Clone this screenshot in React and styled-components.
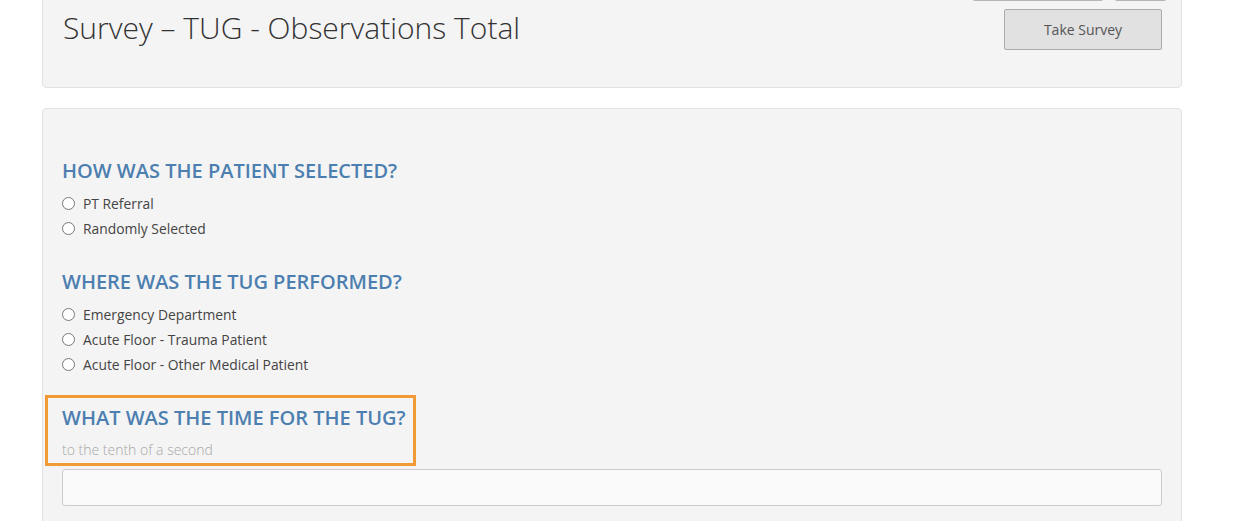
import React from "react";
import styled, { createGlobalStyle } from "styled-components";

const GlobalStyle = createGlobalStyle`
  html, body {
    margin: 0;
    padding: 0;
    background: #ffffff;
    font-family: "Open Sans", "Liberation Sans", sans-serif;
    overflow: hidden;
  }
`;

const Page = styled.div`
  width: 1140px;
  margin-left: 42px;
  display: flex;
  flex-direction: column;
  gap: 20px;
`;

const Panel = styled.div`
  background: #f4f4f4;
  border: 1px solid #e3e3e3;
  border-radius: 4px;
  box-sizing: border-box;
`;

const HeaderPanel = styled(Panel)`
  margin-top: -41px;
  padding: 11px 19px 37px 20px;
  display: flex;
  justify-content: space-between;
  align-items: flex-start;
`;

const Title = styled.h1`
  margin: 40px 0 0;
  font-size: 30px;
  line-height: 33px;
  font-weight: 300;
  color: #333;
`;

const Actions = styled.div`
  display: flex;
  flex-direction: column;
  align-items: flex-end;
  gap: 8px;
`;

const ButtonGroup = styled.div`
  display: flex;
  gap: 10px;
  margin-right: -5px;
`;

const GhostButton = styled.div`
  width: ${(p) => p.$w}px;
  height: 30px;
  box-sizing: border-box;
  border: 1px solid #b5b5b5;
  border-radius: 3px;
  background: #f4f4f4;
`;

const TakeButton = styled.button`
  width: 158px;
  height: 41px;
  background: #e1e1e1;
  border: 1px solid #acacac;
  border-radius: 2px;
  font-family: "Open Sans", "Liberation Sans", sans-serif;
  font-size: 14px;
  color: #555;
  cursor: pointer;
`;

const FormPanel = styled(Panel)`
  padding: 50px 19px 40px 19px;
  display: flex;
  flex-direction: column;
  align-items: flex-start;
`;

const Question = styled.h2`
  margin: 0 0 ${(p) => (p.$flush ? 0 : 8)}px;
  font-size: 20px;
  line-height: 24px;
  font-weight: 600;
  color: #4c7fb0;
  white-space: nowrap;
`;

const Options = styled.div`
  display: flex;
  flex-direction: column;
  margin-bottom: 29px;
`;

const Option = styled.label`
  display: flex;
  align-items: center;
  height: 25px;
  gap: 8px;
  font-size: 13.85px;
  color: #444;
`;

const Radio = styled.input`
  width: 13px;
  height: 13px;
  margin: 0;
`;

const Highlight = styled.div`
  margin: -11px 0 0 -17px;
  width: 371px;
  box-sizing: border-box;
  border: 3px solid #f29a36;
  padding: 8px 14px 4px;
`;

const Help = styled.div`
  margin-top: 11px;
  font-size: 14px;
  line-height: 18px;
  font-weight: 300;
  color: #a8a8a8;
`;

const TextInput = styled.input`
  margin-top: 3px;
  width: 100%;
  height: 37px;
  box-sizing: border-box;
  background: #fafafa;
  border: 1px solid #cccccc;
  border-radius: 3px;
`;

const questions = [
  {
    name: "selected",
    title: "HOW WAS THE PATIENT SELECTED?",
    options: ["PT Referral", "Randomly Selected"],
  },
  {
    name: "performed",
    title: "WHERE WAS THE TUG PERFORMED?",
    options: [
      "Emergency Department",
      "Acute Floor - Trauma Patient",
      "Acute Floor - Other Medical Patient",
    ],
  },
];

export default function App() {
  return (
    <>
      <GlobalStyle />
      <Page>
        <HeaderPanel>
          <Title>Survey – TUG - Observations Total</Title>
          <Actions>
            <ButtonGroup>
              <GhostButton $w={132} />
              <GhostButton $w={53} />
            </ButtonGroup>
            <TakeButton>Take Survey</TakeButton>
          </Actions>
        </HeaderPanel>
        <FormPanel>
          {questions.map((q) => (
            <React.Fragment key={q.name}>
              <Question>{q.title}</Question>
              <Options>
                {q.options.map((o) => (
                  <Option key={o}>
                    <Radio type="radio" name={q.name} />
                    {o}
                  </Option>
                ))}
              </Options>
            </React.Fragment>
          ))}
          <Highlight>
            <Question $flush>WHAT WAS THE TIME FOR THE TUG?</Question>
            <Help>to the tenth of a second</Help>
          </Highlight>
          <TextInput type="text" />
        </FormPanel>
      </Page>
    </>
  );
}
